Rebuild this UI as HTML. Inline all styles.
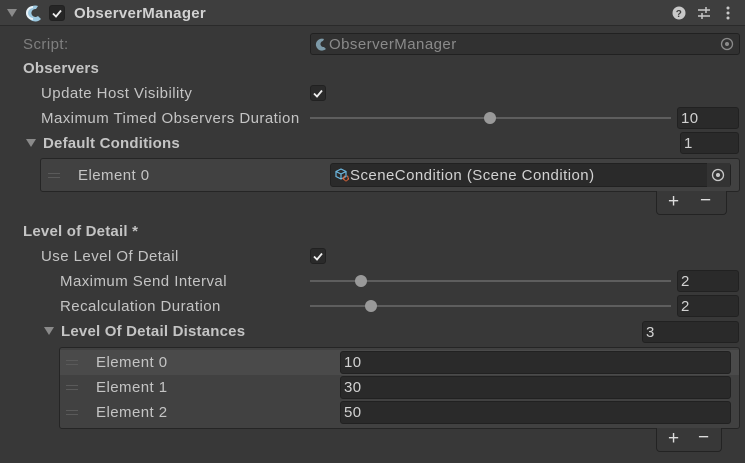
<!DOCTYPE html>
<html><head><meta charset="utf-8"><style>
*{box-sizing:border-box;margin:0;padding:0}
body{width:745px;height:463px;background:#383838;font-family:"Liberation Sans",sans-serif;font-size:15px;letter-spacing:0.45px;color:#c4c4c4;position:relative;overflow:hidden}
.a{position:absolute;white-space:nowrap}
.t{position:absolute;white-space:nowrap;line-height:20px}
.b{font-weight:bold;letter-spacing:0.2px}
.f{position:absolute;background:#2a2a2a;border:1px solid #212121;border-radius:3px;color:#d2d2d2;padding-left:3px;line-height:21px}
.cb{position:absolute;width:16px;height:16px;background:#2a2a2a;border:1px solid #212121;border-radius:3px}
.tr{position:absolute;height:2px;background:#5e5e5e}
.th{position:absolute;width:12px;height:12px;border-radius:6px;background:#999}
.tri{position:absolute;width:0;height:0;border-left:5px solid transparent;border-right:5px solid transparent;border-top:8px solid #8a8a8a}
.dr{position:absolute;width:12px;height:5px;border-top:1px solid #5a5a5a;border-bottom:1px solid #5a5a5a}
.pm{position:absolute;background:#383838;border:1px solid #232323;border-top:none;border-radius:0 0 4px 4px;color:#ddd;font-size:19px;line-height:22px}
</style></head><body>
<div class="a" style="left:0;top:0;width:745px;height:26px;background:#3e3e3e;border-bottom:1px solid #2a2a2a"></div>
<div class="tri" style="left:7px;top:9px"></div>
<svg class="a" style="left:24px;top:3px" width="20" height="20" viewBox="0 0 20 20"><path d="M14 3A8 8 0 1 0 17 16 L14 13A4 4 0 1 1 12 6Z" fill="#9cc8e0"/><path d="M9 4A6 6 0 0 0 9 16" stroke="#e8f2f8" stroke-width="2" fill="none"/></svg>
<div class="cb" style="left:49px;top:5px;background:#262626"></div>
<svg class="a" style="left:49px;top:5px" width="16" height="16"><path d="M4 8.5l3 3 5-6" stroke="#eee" stroke-width="1.8" fill="none"/></svg>
<div class="t b" style="left:74px;top:4px;color:#d2d2d2;font-size:15px;letter-spacing:0.3px">ObserverManager</div>
<svg class="a" style="left:672px;top:6px" width="14" height="14"><circle cx="7" cy="7" r="6.5" fill="#c8c8c8"/><text x="7" y="11" text-anchor="middle" font-size="10" font-weight="bold" fill="#3e3e3e" font-family="Liberation Sans">?</text></svg>
<svg class="a" style="left:697px;top:6px" width="14" height="14" stroke="#c8c8c8" stroke-width="1.5"><path d="M1 4h12M1 10h12M9 1v6M5 7v6"/></svg>
<svg class="a" style="left:726px;top:6px" width="4" height="14" fill="#c8c8c8"><circle cx="2" cy="2" r="1.5"/><circle cx="2" cy="7" r="1.5"/><circle cx="2" cy="12" r="1.5"/></svg>

<div class="t" style="left:23px;top:35px;color:#7f7f7f">Script:</div>
<div class="f" style="left:310px;top:33px;width:430px;height:22px;background:#313131;color:#8a8a8a;padding-left:18px">ObserverManager</div>
<svg class="a" style="left:314px;top:37px" width="14" height="14"><path d="M10 2A6 6 0 1 0 12 12L10 10A3 3 0 1 1 9 4Z" fill="#7d9aa8"/></svg>
<svg class="a" style="left:720px;top:37px" width="14" height="14"><circle cx="7" cy="7" r="5.5" stroke="#8a8a8a" stroke-width="1.3" fill="none"/><circle cx="7" cy="7" r="2" fill="#8a8a8a"/></svg>

<div class="t b" style="left:23px;top:59px">Observers</div>
<div class="t" style="left:41px;top:84px">Update Host Visibility</div>
<div class="cb" style="left:310px;top:85px"></div>
<svg class="a" style="left:310px;top:85px" width="16" height="16"><path d="M4 8.5l3 3 5-6" stroke="#eee" stroke-width="1.8" fill="none"/></svg>
<div class="t" style="left:41px;top:109px">Maximum Timed Observers Duration</div>
<div class="tr" style="left:310px;top:117px;width:361px"></div>
<div class="th" style="left:484px;top:112px"></div>
<div class="f" style="left:677px;top:107px;width:62px;height:22px">10</div>

<div class="tri" style="left:26px;top:139px"></div>
<div class="t b" style="left:43px;top:134px">Default Conditions</div>
<div class="f" style="left:680px;top:132px;width:59px;height:22px">1</div>
<div class="a" style="left:40px;top:158px;width:700px;height:34px;background:#414141;border:1px solid #252525;border-radius:3px"></div>
<div class="dr" style="left:48px;top:173px"></div>
<div class="t" style="left:78px;top:166px">Element 0</div>
<div class="f" style="left:330px;top:163px;width:401px;height:24px;padding-left:19px;line-height:23px">SceneCondition (Scene Condition)</div>
<svg class="a" style="left:335px;top:168px" width="14" height="14"><path d="M6 1l5 2.5v5L6 11 1 8.5v-5z M1 3.5L6 6l5-2.5M6 6v5" stroke="#6cb8e0" stroke-width="1.2" fill="none"/><path d="M10 8q-1 0-1 1.5t-1 1 1 1 1 1.5M12 8q1 0 1 1.5t1 1-1 1-1 1.5" stroke="#e0663a" stroke-width="1" fill="none"/></svg>
<div class="a" style="left:707px;top:163px;width:23px;height:24px;background:#333"></div>
<svg class="a" style="left:711px;top:168px" width="14" height="14"><circle cx="7" cy="7" r="5.5" stroke="#c8c8c8" stroke-width="1.3" fill="none"/><circle cx="7" cy="7" r="2" fill="#c8c8c8"/></svg>
<div class="pm" style="left:656px;top:191px;width:71px;height:24px"><span class="a" style="left:11px;top:0">+</span><span class="a" style="left:43px;top:-1px">−</span></div>

<div class="t b" style="left:23px;top:222px">Level of Detail *</div>
<div class="t" style="left:41px;top:247px">Use Level Of Detail</div>
<div class="cb" style="left:310px;top:248px"></div>
<svg class="a" style="left:310px;top:248px" width="16" height="16"><path d="M4 8.5l3 3 5-6" stroke="#eee" stroke-width="1.8" fill="none"/></svg>
<div class="t" style="left:60px;top:272px">Maximum Send Interval</div>
<div class="tr" style="left:310px;top:280px;width:361px"></div>
<div class="th" style="left:355px;top:275px"></div>
<div class="f" style="left:677px;top:270px;width:62px;height:22px">2</div>
<div class="t" style="left:60px;top:297px">Recalculation Duration</div>
<div class="tr" style="left:310px;top:305px;width:361px"></div>
<div class="th" style="left:365px;top:300px"></div>
<div class="f" style="left:677px;top:295px;width:62px;height:22px">2</div>

<div class="tri" style="left:44px;top:327px"></div>
<div class="t b" style="left:61px;top:322px">Level Of Detail Distances</div>
<div class="f" style="left:642px;top:321px;width:97px;height:22px">3</div>
<div class="a" style="left:59px;top:347px;width:681px;height:82px;background:#414141;border:1px solid #252525;border-radius:3px"></div>
<div class="a" style="left:60px;top:350px;width:679px;height:25px;background:#4a4a4a"></div>
<div class="dr" style="left:66px;top:360px"></div>
<div class="dr" style="left:66px;top:385px"></div>
<div class="dr" style="left:66px;top:410px"></div>
<div class="t" style="left:96px;top:353px">Element 0</div>
<div class="t" style="left:96px;top:378px">Element 1</div>
<div class="t" style="left:96px;top:403px">Element 2</div>
<div class="f" style="left:340px;top:351px;width:391px;height:23px">10</div>
<div class="f" style="left:340px;top:376px;width:391px;height:23px">30</div>
<div class="f" style="left:340px;top:401px;width:391px;height:23px">50</div>
<div class="pm" style="left:656px;top:428px;width:66px;height:24px"><span class="a" style="left:11px;top:0">+</span><span class="a" style="left:41px;top:-1px">−</span></div>
</body></html>
